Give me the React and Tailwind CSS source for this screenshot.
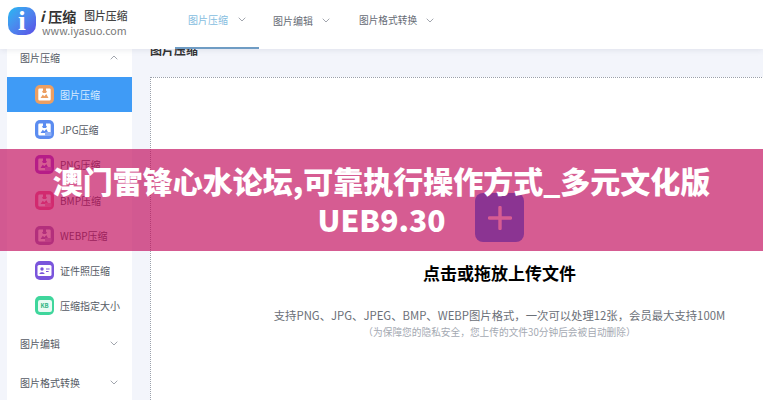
const font = { fontFamily: '"Noto Sans CJK SC", "Noto Sans", sans-serif' }

const PicIcon = ({ bg, color, label, fill }) => (
  <div className={`w-[19px] h-[19px] rounded-[5px] flex items-center justify-center ${bg}`}>
    <svg width="15" height="15" viewBox="0 0 15 15" fill="none">
      <path d="M2.5 1.5 H6 V3.5 L5 4.8 L6.2 6 H8.8 L10 4.8 L9 3.5 V1.5 H12.5 A1.2 1.2 0 0 1 13.7 2.7 V12.3 A1.2 1.2 0 0 1 12.5 13.5 H2.5 A1.2 1.2 0 0 1 1.3 12.3 V2.7 A1.2 1.2 0 0 1 2.5 1.5 Z" fill="#fff" />
      <path d="M3.5 11 L5.8 7.8 L7.3 9.2 L9.3 7 L11.5 11 Z" fill={color} />
      {label && <rect x="8" y="10" width="6.5" height="4" rx="1" fill={fill} />}
    </svg>
  </div>
)

const IdIcon = () => (
  <div className="w-[19px] h-[19px] rounded-[5px] bg-[#7a55dc] flex items-center justify-center">
    <svg width="15" height="13" viewBox="0 0 15 13">
      <rect x="0.5" y="1" width="14" height="11" rx="1.5" fill="#fff" />
      <circle cx="5" cy="5" r="1.7" fill="#7a55dc" />
      <path d="M2.4 10 C2.4 7.5 7.6 7.5 7.6 10 Z" fill="#7a55dc" />
      <rect x="9" y="4.5" width="3.6" height="1" fill="#7a55dc" />
      <rect x="9" y="7" width="2.6" height="1" fill="#7a55dc" />
    </svg>
  </div>
)

const KbIcon = () => (
  <div className="w-[19px] h-[19px] rounded-[5px] bg-[#3fd69c] flex items-center justify-center">
    <div className="w-[14px] h-[12px] rounded-[2px] bg-[#e9fbf4] text-[6px] leading-[12px] font-bold text-center text-[#32b585]">KB</div>
  </div>
)

const Chevron = ({ up, className = '' }) => (
  <svg width="8" height="5" viewBox="0 0 8 5" fill="none" className={className}>
    <path d={up ? 'M0.7 4.3 L4 1 L7.3 4.3' : 'M0.7 0.7 L4 4 L7.3 0.7'} stroke="#8a8f99" strokeWidth="0.8" />
  </svg>
)

const items = [
  { name: '图片压缩', icon: <PicIcon bg="bg-[#ec9f62]" color="#ec9f62" />, active: true },
  { name: 'JPG压缩', icon: <PicIcon bg="bg-[#5b8cf0]" color="#5b8cf0" label fill="#8fb0f5" /> },
  { name: 'PNG压缩', icon: <PicIcon bg="bg-[#a44be0]" color="#a44be0" label fill="#c48af0" /> },
  { name: 'BMP压缩', icon: <PicIcon bg="bg-[#f3709c]" color="#f3709c" label fill="#f8a0bd" /> },
  { name: 'WEBP压缩', icon: <PicIcon bg="bg-[#9c7fc0]" color="#9c7fc0" label fill="#bda8d8" /> },
  { name: '证件照压缩', icon: <IdIcon /> },
  { name: '压缩指定大小', icon: <KbIcon /> },
]

const GroupRow = ({ name, up, className = '' }) => (
  <div className={`flex items-center justify-between pl-[13px] pr-[14px] text-[10px] text-[#555a64] ${className}`}>
    <span>{name}</span>
    <Chevron up={up} />
  </div>
)

export default function App() {
  return (
    <div className="relative w-[763px] h-[400px] overflow-hidden bg-[#f3f5fb] flex flex-col" style={font}>
      {/* header */}
      <header className="relative z-10 h-[49px] shrink-0 bg-white flex shadow-[0_1px_6px_rgba(40,50,90,0.10)]">
        <div className="w-[175px] pl-[8px] pt-[7px] flex items-start gap-[4px]">
          <div className="w-[28px] h-[28px] rounded-[10px] bg-gradient-to-br from-[#1cb8f2] to-[#5a4be6] flex items-center justify-center text-white text-[28px] font-bold leading-none" style={{ fontFamily: '"Liberation Serif", serif' }}>
            i
          </div>
          <div className="flex flex-col">
            <div className="flex items-center gap-[8px] h-[17px]">
              <span className="text-[14px] font-bold text-[#333] leading-none"><i className="mr-[4px]">i</i>压缩</span>
              <span className="text-[10.8px] font-medium text-[#444] leading-none">图片压缩</span>
            </div>
            <span className="ml-[2px] text-[10.7px] leading-[13px] text-[#777]">www.iyasuo.com</span>
          </div>
        </div>
        <div className="w-[84px] h-[49px] pb-[9px] border-b-[2px] border-[#6f9cc4] flex items-center justify-center gap-[10px] text-[10px] text-[#86bde0]">
          <span>图片压缩</span>
          <Chevron />
        </div>
        <div className="ml-[14px] h-[49px] pb-[9px] flex items-center gap-[9px] text-[10px] text-[#666b75]">
          <span>图片编辑</span>
          <Chevron />
        </div>
        <div className="ml-[29px] h-[49px] pb-[9px] flex items-center gap-[9px] text-[9.7px] text-[#666b75]">
          <span>图片格式转换</span>
          <Chevron />
        </div>
      </header>

      <div className="flex-1 flex min-h-0">
        {/* sidebar */}
        <aside className="ml-[7px] w-[125px] shrink-0 bg-white">
          <GroupRow name="图片压缩" up className="h-[28px] pb-[12px]" />
          {items.map(item => (
            <div
              key={item.name}
              className={`h-[35.2px] flex items-center pl-[28px] gap-[6px] text-[10px] whitespace-nowrap ${item.active ? 'bg-[#3f9bf6] text-[#d9ecff]' : 'text-[#555a64]'}`}
            >
              {item.icon}
              <span>{item.name}</span>
            </div>
          ))}
          <GroupRow name="图片编辑" className="h-[38px] pt-[2px]" />
          <GroupRow name="图片格式转换" className="h-[40px] pt-[2px]" />
        </aside>

        {/* main, wider than the window like the original page */}
        <main className="ml-[18px] w-[698px] shrink-0 flex flex-col">
          <h2 className="-mt-[7px] h-[35px] text-[12px] font-bold text-[#333] leading-[16px]">图片压缩</h2>
          <div className="flex-1 bg-white border-t border-l border-dotted border-[#9aa0aa] flex flex-col items-center">
            <div className="mt-[115px] w-[49px] h-[49px] rounded-[8px] bg-[#2a8cff] flex items-center justify-center">
              <svg width="24" height="24" viewBox="0 0 24 24">
                <path d="M12 1.5 V22.5 M1.5 12 H22.5" stroke="#fff" strokeWidth="3.4" strokeLinecap="round" />
              </svg>
            </div>
            <div className="mt-[20px] text-[17px] font-bold leading-[22px] text-black">点击或拖放上传文件</div>
            <div className="mt-[23px] text-[11.35px] leading-[16px] text-[#6b7078] whitespace-nowrap">支持PNG、JPG、JPEG、BMP、WEBP图片格式，一次可以处理12张，会员最大支持100M</div>
            <div className="mt-[2px] text-[9.7px] leading-[14px] text-[#a4a9b2] whitespace-nowrap">（为保障您的隐私安全，您上传的文件30分钟后会被自动删除）</div>
          </div>
        </main>
      </div>

      {/* banner laid over the page */}
      <div className="absolute left-0 right-0 top-[149px] h-[102px] bg-[#c00558]/65 flex items-center justify-center px-[40px]">
        <p className="text-center text-white font-black text-[30px] leading-[39px]">澳门雷锋心水论坛,可靠执行操作方式_多元文化版UEB9.30</p>
      </div>
    </div>
  )
}
